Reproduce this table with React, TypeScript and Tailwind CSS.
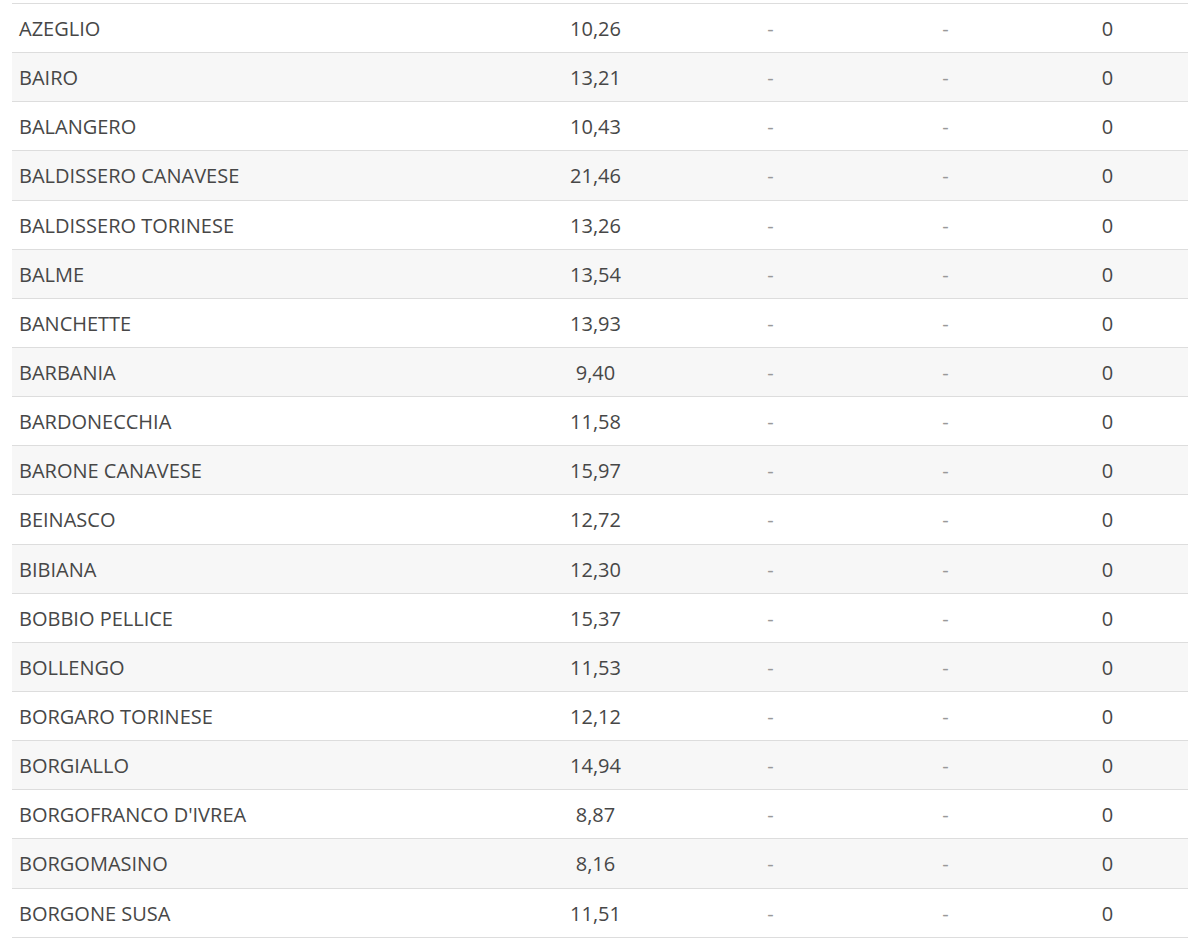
const rows: [string, string][] = [
  ["AZEGLIO", "10,26"],
  ["BAIRO", "13,21"],
  ["BALANGERO", "10,43"],
  ["BALDISSERO CANAVESE", "21,46"],
  ["BALDISSERO TORINESE", "13,26"],
  ["BALME", "13,54"],
  ["BANCHETTE", "13,93"],
  ["BARBANIA", "9,40"],
  ["BARDONECCHIA", "11,58"],
  ["BARONE CANAVESE", "15,97"],
  ["BEINASCO", "12,72"],
  ["BIBIANA", "12,30"],
  ["BOBBIO PELLICE", "15,37"],
  ["BOLLENGO", "11,53"],
  ["BORGARO TORINESE", "12,12"],
  ["BORGIALLO", "14,94"],
  ["BORGOFRANCO D'IVREA", "8,87"],
  ["BORGOMASINO", "8,16"],
  ["BORGONE SUSA", "11,51"],
];

export default function App() {
  return (
    <div className="bg-white w-[1200px] h-[940px] overflow-hidden pl-3 pr-3 pt-[3px] font-['Open_Sans',sans-serif] text-[20px] text-[#474747]">
      <div className="border-t border-[#ddd]">
        {rows.map(([name, value], i) => (
          <div
            key={name}
            className={`grid grid-cols-[496px_175px_175px_175px_155px] h-[49.15px] pt-[2px] items-center border-b border-[#ddd] ${
              i % 2 === 1 ? "bg-[#f7f7f7]" : "bg-white"
            }`}
          >
            <div className="pl-[7px]">{name}</div>
            <div className="text-center">{value}</div>
            <div className="text-center text-[#999]">-</div>
            <div className="text-center text-[#999]">-</div>
            <div className="text-center pr-[6px]">0</div>
          </div>
        ))}
      </div>
    </div>
  );
}
